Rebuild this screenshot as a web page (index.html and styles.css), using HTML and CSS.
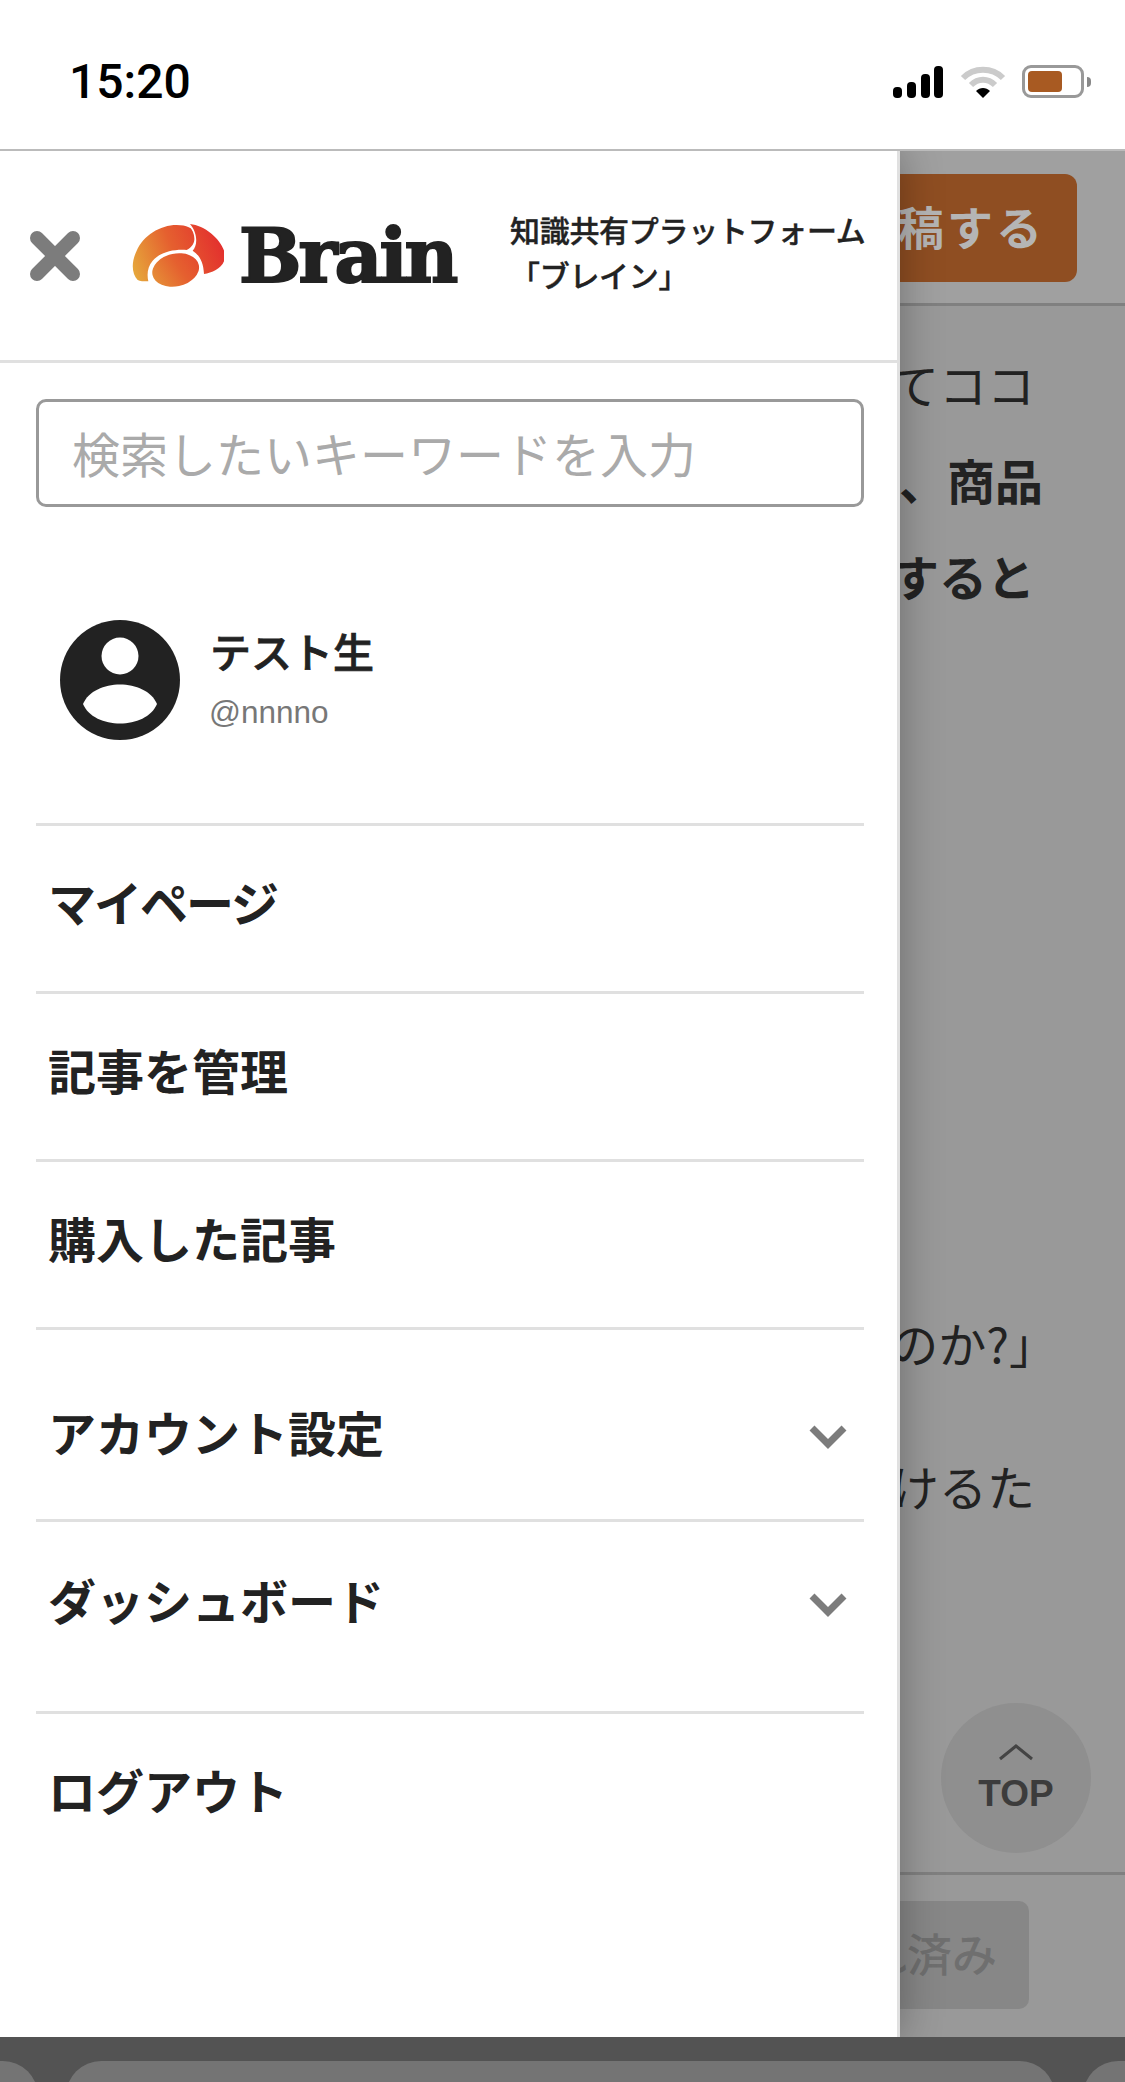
FILE: index.html
```html
<!DOCTYPE html>
<html lang="ja">
  <head>
    <meta charset="UTF-8" />
    <title>Brain</title>
    <link rel="stylesheet" href="styles.css">
  </head>
  <body>
    <div class="status-bar">
      <div class="time">15:20</div>
      <div class="status-icons">
        <svg class="signal" width="50" height="32" viewBox="0 0 50 32">
          <rect x="0" y="21" width="9" height="11" rx="4" />
          <rect x="14" y="16" width="9" height="16" rx="4" />
          <rect x="28" y="8" width="9" height="24" rx="4" />
          <rect x="41" y="0" width="9" height="32" rx="4" />
        </svg>
        <svg class="wifi" width="46" height="34" viewBox="0 0 46 34">
          <path d="M3 13 C14 2 32 2 43 13" fill="none" stroke="#cbcbcb" stroke-width="6" />
          <path d="M11 20 C18 13 28 13 35 20" fill="none" stroke="#cbcbcb" stroke-width="6" />
          <path d="M16 26 C20 22 26 22 30 26 L23 33 Z" fill="#000" />
        </svg>
        <div class="battery"><div class="battery-fill"></div></div>
        <div class="battery-nub"></div>
      </div>
    </div>

    <div class="screen">
      <!-- page behind the drawer -->
      <div class="page">
        <div class="page-head">
          <div class="post-btn">投稿する</div>
        </div>
        <div class="article">
          <div class="line">てココ</div>
          <div class="line bold wide">、商品</div>
          <div class="line bold">すると</div>
          <div class="line gap-a">のか?」</div>
          <div class="line gap-b">けるた</div>
        </div>
        <div class="page-foot">
          <div class="cart-btn">入れ済み</div>
        </div>
      </div>

      <div class="top-btn">
        <svg width="36" height="18" viewBox="0 0 36 18">
          <path d="M2 16 L18 3 L34 16" fill="none" stroke="#444" stroke-width="3" />
        </svg>
        <div class="top-label">TOP</div>
      </div>

      <nav class="drawer">
        <div class="drawer-head">
          <svg class="close" width="50" height="50" viewBox="0 0 50 50">
            <path d="M7 7 L43 43 M43 7 L7 43" fill="none" stroke="#7c7c7c" stroke-width="14" stroke-linecap="round" />
          </svg>
          <svg class="logo-mark" width="92" height="64" viewBox="396 100 276 192">
            <defs>
              <linearGradient id="brainGrad" gradientUnits="userSpaceOnUse" x1="400" y1="275" x2="670" y2="170">
                <stop offset="0" stop-color="#e6ad3c" />
                <stop offset="0.5" stop-color="#e5602f" />
                <stop offset="1" stop-color="#e3302e" />
              </linearGradient>
            </defs>
            <path fill="url(#brainGrad)" d="M413 268 C395 250 393 215 410 180 C430 135 480 103 530 103 C560 103 578 112 584 128 C588 150 578 170 560 178 C520 175 480 185 458 210 C443 228 440 250 445 272 C430 272 420 272 413 268 Z" />
            <path fill="url(#brainGrad)" stroke="#fff" stroke-width="10" paint-order="stroke" d="M570 100 C620 105 673 155 675 195 C675 230 640 245 612 250 C610 215 600 195 578 180 C592 165 595 130 570 100 Z" />
            <ellipse fill="url(#brainGrad)" stroke="#fff" stroke-width="14" paint-order="stroke" cx="527" cy="238" rx="71" ry="49" transform="rotate(-12 527 238)" />
          </svg>
          <div class="logo-text">Brain</div>
          <div class="tagline">知識共有プラットフォーム<br>「ブレイン」</div>
        </div>

        <div class="search">
          <input class="search-input" type="text" placeholder="検索したいキーワードを入力" />
        </div>

        <div class="user">
          <svg class="avatar" width="120" height="120" viewBox="0 0 120 120">
            <circle cx="60" cy="60" r="60" fill="#222" />
            <circle cx="60" cy="36" r="18.5" fill="#fff" />
            <path d="M23 84 C34 58 86 58 97 84 C86 110 34 110 23 84 Z" fill="#fff" />
          </svg>
          <div class="user-text">
            <div class="user-name">テスト生</div>
            <div class="user-id">@nnnno</div>
          </div>
        </div>

        <div class="menu">
          <div class="menu-row mypage">マイページ</div>
          <div class="menu-row">記事を管理</div>
          <div class="menu-row">購入した記事</div>
          <div class="menu-row sub account">アカウント設定
            <svg class="chevron" width="38" height="24" viewBox="0 0 38 24">
              <path d="M3 3 L19 19 L35 3" fill="none" stroke="#7c7c7c" stroke-width="7" />
            </svg>
          </div>
          <div class="menu-row sub">ダッシュボード
            <svg class="chevron" width="38" height="24" viewBox="0 0 38 24">
              <path d="M3 3 L19 19 L35 3" fill="none" stroke="#7c7c7c" stroke-width="7" />
            </svg>
          </div>
          <div class="menu-row">ログアウト</div>
        </div>
      </nav>
    </div>

    <div class="toolbar">
      <div class="tab"></div>
      <div class="tab tab-main"></div>
      <div class="tab"></div>
    </div>
  </body>
</html>
```

FILE: styles.css
```css
* {
  box-sizing: border-box;
}
html,
body {
  margin: 0;
  height: 2082px;
}
body {
  display: flex;
  flex-direction: column;
  overflow: hidden;
  background: #fff;
  color: #222;
  font-family: "Noto Sans CJK JP", "Noto Sans", sans-serif;
}

/* status bar */
.status-bar {
  display: flex;
  justify-content: space-between;
  align-items: center;
  flex: 0 0 151px;
  padding: 22px 34px 8px 69px;
  border-bottom: 2px solid #bbb;
  position: relative;
  z-index: 3;
  background: #fff;
}
.time {
  font-family: Roboto, "Liberation Sans", sans-serif;
  font-weight: 500;
  font-size: 48px;
  color: #000;
}
.status-icons {
  display: flex;
  align-items: center;
}
.wifi {
  margin-left: 17px;
}
.battery {
  width: 62px;
  height: 33px;
  margin-left: 16px;
  padding: 3px;
  border: 3px solid #999;
  border-radius: 9px;
}
.battery-fill {
  width: 34px;
  height: 100%;
  background: #a85a22;
  border-radius: 4px;
}
.battery-nub {
  width: 4px;
  height: 10px;
  margin-left: 3px;
  background: #888;
  border-radius: 0 5px 5px 0;
}

/* page behind */
.screen {
  flex: 1;
  position: relative;
  overflow: hidden;
}
.page {
  height: 100%;
  display: flex;
  flex-direction: column;
  background: #999;
}
.page-head {
  display: flex;
  justify-content: flex-end;
  flex: 0 0 155px;
  padding: 23px 48px 0 0;
  border-bottom: 3px solid #808080;
  background: #a0a0a0;
}
.post-btn {
  width: 300px;
  height: 108px;
  line-height: 102px;
  padding-right: 32px;
  text-align: right;
  font-size: 46px;
  font-weight: 700;
  letter-spacing: 3px;
  color: #b5b5b5;
  background: #8f4e22;
  border-radius: 12px;
}
.article {
  flex: 1;
  padding-top: 29px;
}
.line {
  height: 96px;
  line-height: 96px;
  padding-right: 90px;
  text-align: right;
  font-size: 48px;
  color: #222;
}
.bold {
  font-weight: 700;
}
.wide {
  padding-right: 82px;
}
.gap-a {
  margin-top: 671px;
  padding-right: 68px;
}
.gap-b {
  margin-top: 47px;
}
.page-foot {
  display: flex;
  justify-content: flex-end;
  flex: 0 0 165px;
  padding: 26px 96px 0 0;
  border-top: 3px solid #808080;
}
.cart-btn {
  width: 300px;
  height: 108px;
  line-height: 104px;
  padding-right: 32px;
  text-align: right;
  font-size: 45px;
  font-weight: 500;
  color: #6f6f6f;
  background: #878787;
  border-radius: 10px;
}
.top-btn {
  position: absolute;
  left: 941px;
  top: 1552px;
  width: 150px;
  height: 150px;
  padding-top: 40px;
  display: flex;
  flex-direction: column;
  align-items: center;
  background: #8f8f8f;
  border-radius: 50%;
}
.top-label {
  font-family: "Liberation Sans", sans-serif;
  font-weight: 700;
  font-size: 37px;
  line-height: 40px;
  margin-top: 13px;
  color: #3c3c3c;
}

/* drawer */
.drawer {
  position: absolute;
  top: 0;
  left: 0;
  bottom: 0;
  width: 900px;
  background: #fff;
  border-right: 3px solid #e0e0e0;
  box-shadow: 0 0 40px rgba(0, 0, 0, 0.3);
}
.drawer-head {
  display: flex;
  align-items: center;
  height: 212px;
  padding-left: 30px;
  border-bottom: 3px solid #e0e0e0;
}
.logo-mark {
  margin-left: 52px;
}
.logo-text {
  margin-left: 15px;
  width: 271px;
  font-family: "DejaVu Serif", serif;
  font-weight: 700;
  font-size: 74px;
  line-height: 1;
  letter-spacing: -3px;
  -webkit-text-stroke: 2px #222;
}
.tagline {
  margin-top: -8px;
  font-size: 30px;
  font-weight: 500;
  line-height: 45px;
  letter-spacing: -0.3px;
  white-space: nowrap;
  -webkit-text-stroke: 0.4px #222;
}
.search {
  padding: 36px 33px 0 36px;
}
.search-input {
  display: block;
  width: 100%;
  height: 108px;
  padding: 0 33px 2px;
  border: 3px solid #999;
  border-radius: 10px;
  outline: none;
  font-family: inherit;
  font-size: 48px;
}
.search-input::placeholder {
  color: #aaa;
  opacity: 1;
}
.user {
  display: flex;
  gap: 30px;
  height: 316px;
  padding: 113px 0 0 60px;
}
.user-text {
  padding-top: 2px;
}
.user-name {
  font-size: 41px;
  font-weight: 500;
  line-height: 56px;
  -webkit-text-stroke: 0.8px #222;
}
.user-id {
  margin-top: 14px;
  margin-left: -1px;
  font-family: "Liberation Sans", sans-serif;
  font-size: 31.5px;
  line-height: 40px;
  color: #777;
}
.menu {
  margin: 0 33px 0 36px;
}
.menu-row {
  display: flex;
  justify-content: space-between;
  height: 168px;
  padding: 39px 14px 0 12px;
  border-top: 3px solid #e0e0e0;
  font-size: 48px;
  font-weight: 700;
  line-height: 72px;
}
.mypage {
  letter-spacing: -2px;
}
.sub {
  height: 192px;
  padding-top: 41px;
}
.account {
  padding-top: 65px;
}
.chevron {
  margin-top: 30px;
  margin-right: 3px;
}

/* browser toolbar */
.toolbar {
  display: flex;
  flex: 0 0 45px;
  gap: 28px;
  margin-left: -40px;
  padding-top: 24px;
  overflow: hidden;
  background: #535353;
}
.tab {
  flex: 0 0 78px;
  height: 70px;
  background: #747474;
  border-radius: 40px;
}
.tab-main {
  flex: 0 0 989px;
}
```
